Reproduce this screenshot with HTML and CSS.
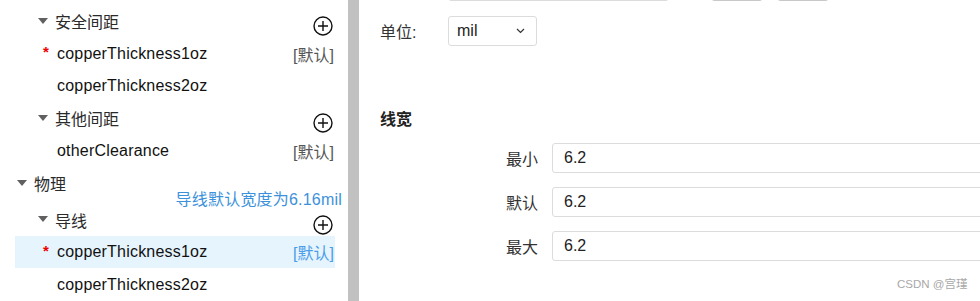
FILE: index.html
```html
<!DOCTYPE html>
<html lang="zh-CN">
<head>
<meta charset="utf-8">
<title>规则设置</title>
<link rel="stylesheet" href="styles.css">
</head>
<body>
<div class="page">
  <aside class="sidebar">
    <div class="tree">
      <div class="row group l2">
        <span class="caret"></span><span class="name">安全间距</span>
        <svg class="plus" width="20" height="20" viewBox="0 0 20 20"><circle cx="10" cy="10" r="9" fill="none" stroke="#111" stroke-width="1.4"/><path d="M5 10h10M10 5v10" stroke="#111" stroke-width="1.4"/></svg>
      </div>
      <div class="row item"><span class="req">*</span><span class="name">copperThickness1oz</span><span class="tag">[默认]</span></div>
      <div class="row item tight"><span class="req"></span><span class="name">copperThickness2oz</span></div>
      <div class="row group l2">
        <span class="caret"></span><span class="name">其他间距</span>
        <svg class="plus" width="20" height="20" viewBox="0 0 20 20"><circle cx="10" cy="10" r="9" fill="none" stroke="#111" stroke-width="1.4"/><path d="M5 10h10M10 5v10" stroke="#111" stroke-width="1.4"/></svg>
      </div>
      <div class="row item"><span class="req"></span><span class="name">otherClearance</span><span class="tag">[默认]</span></div>
      <div class="row group l1"><span class="caret"></span><span class="name">物理</span></div>
      <div class="row group l2 hinted">
        <span class="hint">导线默认宽度为6.16mil</span>
        <span class="caret"></span><span class="name">导线</span>
        <svg class="plus" width="20" height="20" viewBox="0 0 20 20"><circle cx="10" cy="10" r="9" fill="none" stroke="#111" stroke-width="1.4"/><path d="M5 10h10M10 5v10" stroke="#111" stroke-width="1.4"/></svg>
      </div>
      <div class="row item active"><span class="req">*</span><span class="name">copperThickness1oz</span><span class="tag">[默认]</span></div>
      <div class="row item"><span class="req"></span><span class="name">copperThickness2oz</span></div>
    </div>
  </aside>
  <div class="scrollbar"></div>
  <main class="content">
    <div class="top-row">
      <div class="top-input"></div>
      <div class="btn"></div>
      <div class="btn"></div>
    </div>
    <div class="unit-row">
      <span class="unit-label">单位:</span>
      <div class="select">
        <span>mil</span>
        <svg class="chev" width="9" height="6" viewBox="0 0 9 6"><path d="M1 1l3.5 3.5L8 1" fill="none" stroke="#333" stroke-width="1.2"/></svg>
      </div>
    </div>
    <div class="section-title">线宽</div>
    <div class="form">
      <div class="field"><span class="field-label">最小</span><div class="input">6.2</div></div>
      <div class="field"><span class="field-label">默认</span><div class="input">6.2</div></div>
      <div class="field"><span class="field-label">最大</span><div class="input">6.2</div></div>
    </div>
  </main>
  <div class="watermark">CSDN @宫瑾</div>
</div>
</body>
</html>
```

FILE: styles.css
```css
* { box-sizing: border-box; }
html, body {
  margin: 0;
  padding: 0;
  background: #fff;
  overflow: hidden;
}
body {
  font-family: "Liberation Sans", "Noto Sans CJK SC", sans-serif;
  font-size: 16px;
  color: #111;
}
.page {
  display: flex;
  width: 980px;
  height: 301px;
  position: relative;
  overflow: hidden;
}
.sidebar {
  width: 348px;
  flex: none;
  padding-top: 5px;
}
.tree {
  margin-left: 15px;
  width: 320px;
}
.row {
  display: flex;
  align-items: center;
  position: relative;
  white-space: nowrap;
}
.row.group { height: 32px; color: #2a2a2a; }
.row.item { height: 33px; padding-left: 28px; }
.row.item.tight { height: 32px; }
.row.item .name { letter-spacing: 0.2px; }
.row.l1 { padding-left: 2px; }
.row.l2 { padding-left: 23px; }
.row.hinted { margin-top: 4px; height: 33px; }
.caret {
  width: 0;
  height: 0;
  border-left: 5.5px solid transparent;
  border-right: 5.5px solid transparent;
  border-top: 6px solid #606060;
  margin-right: 7px;
  margin-top: -1px;
}
.plus {
  margin-left: auto;
  margin-right: 2px;
  align-self: flex-end;
  margin-bottom: 1px;
}
.req {
  width: 14px;
  color: #e00;
  font-weight: bold;
  font-size: 15px;
  margin-top: -4px;
}
.tag {
  margin-left: auto;
  color: #555;
  margin-right: 1px;
}
.row.active { height: 32px; background: #e6f4fd; }
.row.active .tag { color: #4a9de9; }
.hint {
  position: absolute;
  right: -7px;
  top: -15px;
  line-height: 24px;
  letter-spacing: 0.2px;
  color: #3d91db;
}
.scrollbar {
  width: 11px;
  flex: none;
  background: #c1c1c1;
}
.content {
  flex: 1;
  padding-left: 21px;
  overflow: hidden;
  color: #333;
}
.top-row {
  display: flex;
  align-items: flex-end;
  height: 30px;
  margin-top: -29px;
}
.top-input {
  margin-left: 68px;
  width: 221px;
  height: 30px;
  border: 1px solid #dcdcdc;
  border-radius: 3px;
}
.btn {
  width: 52px;
  height: 31px;
  background: #c8c8c8;
  border-radius: 4px;
  margin-left: 42px;
}
.btn + .btn { margin-left: 14px; }
.unit-row {
  display: flex;
  align-items: center;
  margin-top: 15px;
  height: 30px;
}
.unit-label { width: 68px; }
.select {
  width: 89px;
  height: 30px;
  border: 1px solid #dcdcdc;
  border-radius: 3px;
  display: flex;
  align-items: center;
  padding-left: 8px;
  padding-right: 11px;
  color: #222;
}
.chev { margin-left: auto; }
.section-title {
  margin-top: 62px;
  line-height: 24px;
  font-weight: bold;
  color: #222;
}
.form {
  margin-top: 11px;
  display: flex;
  flex-direction: column;
  gap: 14px;
}
.field {
  display: flex;
  align-items: center;
  height: 30px;
}
.field-label {
  width: 158px;
  text-align: right;
  margin-right: 14px;
  flex: none;
}
.input {
  flex: none;
  width: 500px;
  height: 30px;
  border: 1px solid #dcdcdc;
  border-radius: 3px;
  padding-left: 11px;
  line-height: 28px;
  color: #222;
}
.watermark {
  position: absolute;
  left: 897px;
  top: 277px;
  font-size: 11.5px;
  line-height: 14px;
  color: #a8a8a8;
}
```
